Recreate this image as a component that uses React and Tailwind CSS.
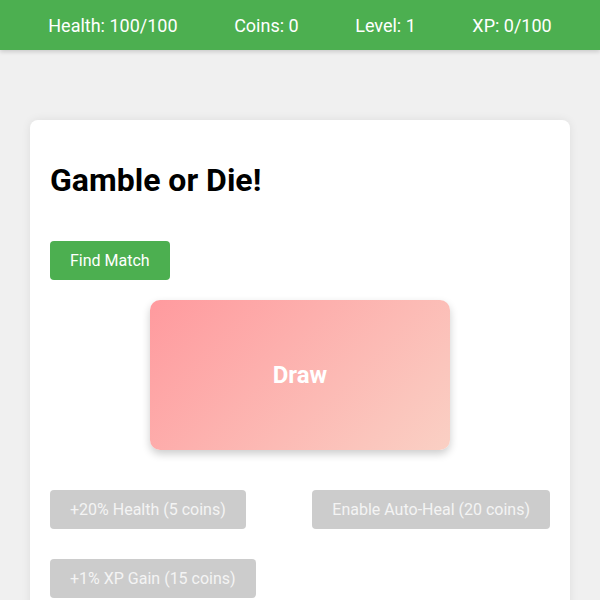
import React from 'react'

const stats = ['Health: 100/100', 'Coins: 0', 'Level: 1', 'XP: 0/100']

const upgrades = ['+20% Health (5 coins)', 'Enable Auto-Heal (20 coins)', '+1% XP Gain (15 coins)']

export default function App() {
  return (
    <div className="min-h-[600px] bg-[#f0f0f0] font-['Roboto',sans-serif]">
      <header className="flex h-[50px] items-center justify-around bg-[#4caf50] px-[20px] text-[18px] leading-[normal] text-white shadow-[0_2px_4px_rgba(0,0,0,0.15)]">
        {stats.map((s) => (
          <span key={s}>{s}</span>
        ))}
      </header>

      <main className="px-[30px] pt-[70px]">
        <section className="rounded-[8px] bg-white p-[20px] shadow-[0_0_10px_rgba(0,0,0,0.08)]">
          <h1 className="my-[21px] text-[32px] font-bold leading-[normal] text-black">Gamble or Die!</h1>

          <div className="mt-[42px]">
            <button
              type="button"
              className="rounded-[4px] bg-[#4caf50] px-[20px] py-[10px] text-[16px] leading-[normal] text-white"
            >
              Find Match
            </button>
          </div>

          <div className="mx-auto mt-[20px] flex h-[150px] w-[300px] items-center justify-center rounded-[10px] bg-[linear-gradient(135deg,#ff9a9e,#fad0c4)] shadow-[0_4px_8px_rgba(0,0,0,0.2)]">
            <span className="text-[24px] font-bold leading-[normal] text-white">Draw</span>
          </div>

          <div className="mt-[40px] flex flex-wrap justify-between gap-y-[30px] pb-[20px]">
            {upgrades.map((u) => (
              <button
                key={u}
                type="button"
                className="rounded-[4px] bg-[#cccccc] px-[20px] py-[10px] text-[16px] leading-[normal] text-[#f4f4f4]"
              >
                {u}
              </button>
            ))}
          </div>
        </section>
      </main>
    </div>
  )
}
